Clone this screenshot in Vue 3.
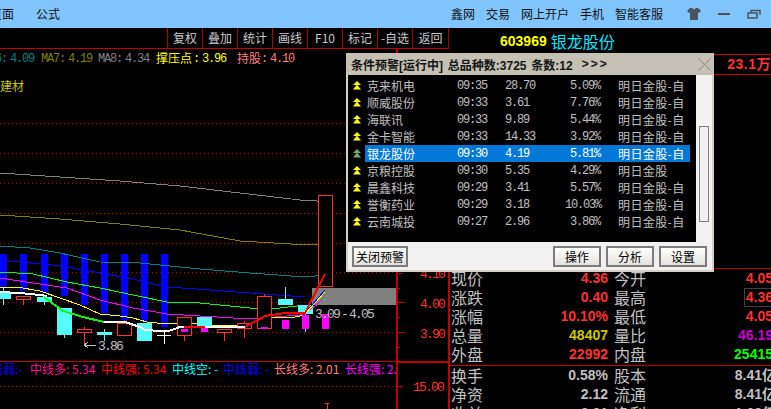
<template>
  <div class="screen">
    <header class="topbar">
      <div class="menu">
        <span class="clip-left">页面</span>
        <span>公式</span>
      </div>
      <div class="menu menu-end">
        <span>鑫网</span>
        <span>交易</span>
        <span>网上开户</span>
        <span>手机</span>
        <span>智能客服</span>
      </div>
      <div class="win-btns">
        <svg width="14" height="14" viewBox="0 0 14 14">
          <path d="M3 1 L5 1 L7 2.5 L9 1 L11 1 L14 4 L12 6 L11 5 L11 13 L3 13 L3 5 L2 6 L0 4 Z" fill="#4a5560" />
        </svg>
        <svg width="14" height="14" viewBox="0 0 14 14">
          <rect x="1" y="6" width="12" height="2" fill="#4a5560" />
        </svg>
        <svg width="14" height="14" viewBox="0 0 14 14">
          <path d="M4 3.5 H13 V8 M1 6 H10 V11 H1 Z M4 3 V6" fill="none" stroke="#4a5560" stroke-width="1.5" />
        </svg>
      </div>
    </header>

    <div class="body">
      <section class="left">
        <div class="toolbar">
          <span v-for="t in tools" :key="t" class="tool">{{ t }}</span>
        </div>
        <svg class="chart" viewBox="0 49 449 360" width="449" height="360">
          <text y="62" class="legend">
            <tspan x="-5" fill="#008080">6: 4.09</tspan>
            <tspan x="41" fill="#808000">MA7: 4.19</tspan>
            <tspan x="98" fill="#808080">MA8: 4.34</tspan>
            <tspan x="193" fill="#ffff00">: 3.96</tspan>
            <tspan x="261" fill="#ff8080">: 4.10</tspan>
          </text>
          <text y="63" class="legend-cjk">
            <tspan x="156" fill="#ffff00">撑压点</tspan>
            <tspan x="237" fill="#ff8080">持股</tspan>
          </text>
          <text x="0" y="91" class="sector">建材</text>

          <line v-for="y in dotted" :key="y" x1="0" x2="397" :y1="y" :y2="y" stroke="#a80000" stroke-dasharray="1 3" />

          <rect v-for="(b, i) in blueBars" :key="'b' + i" :x="b[0]" y="254" width="7" :height="b[1] - 254" fill="#0000ff" />

          <polyline v-for="l in thinLines" :key="l.color" :points="l.points" :stroke="l.color" fill="none" />

          <g v-for="(c, i) in candles" :key="'c' + i">
            <line :x1="c.x + 7.5" :x2="c.x + 7.5" :y1="c.hi" :y2="c.lo" :stroke="c.color" />
            <rect :x="c.solid ? c.x : c.x + 0.5" :y="c.solid ? c.top : c.top + 0.5" :width="c.solid ? 15 : 14" :height="c.solid ? c.bot - c.top : c.bot - c.top - 1" :fill="c.solid ? c.color : '#000'" :stroke="c.solid ? 'none' : c.color" />
          </g>

          <rect v-for="(m, i) in magenta" :key="'m' + i" :x="m[0]" :y="m[1]" width="7" :height="m[2] - m[1]" fill="#ff00ff" />

          <line x1="157" x2="171" y1="335.5" y2="335.5" stroke="#fff" />
          <line x1="164.5" x2="164.5" y1="331" y2="344" stroke="#fff" />

          <polyline points="0,292 20,293 40,295 47,296" stroke="#fff" stroke-width="2" fill="none" />
          <polyline points="44,297 63,311 83,317 104,322" stroke="#00ff00" stroke-width="2" fill="none" />
          <polyline points="104,322 125,322 140,327 145,330 160,331 170,330.5 180,327 245,327" stroke="#fff" stroke-width="2" fill="none" />
          <polyline points="184,327 205,327" stroke="#ff0000" stroke-width="2" fill="none" />

          <rect x="312" y="288" width="85" height="17" fill="#808080" />

          <polyline points="305,313 325,290" stroke="#0000ff" fill="none" />
          <polyline points="305,313 325,299" stroke="#00ff00" fill="none" />
          <polyline points="305,313 323,300" stroke="#ff00ff" fill="none" />
          <polyline points="305,314 325,292" stroke="#ffff00" fill="none" />
          <polyline points="245,327 265,316 285,313 305,313 325,274" stroke="#ff0000" stroke-width="2" fill="none" />

          <path d="M96 345 H85 M88 342 L84.5 345 L88 348" stroke="#c0c0c0" fill="none" />
          <text x="98" y="350" class="note">3.86</text>
          <text x="315" y="318" class="note">3.09 - 4.05</text>

          <line x1="0" x2="397" y1="361.5" y2="361.5" stroke="#c00000" />
          <line x1="397" x2="449" y1="362" y2="362" stroke="#c00000" stroke-width="2" />
          <line x1="0" x2="397" y1="386" y2="386" stroke="#a80000" stroke-dasharray="1 3" />

          <text y="374" class="ind">
            <tspan x="-9" fill="#0000ff">线弱:-</tspan>
            <tspan x="30" fill="#ff1493">中线多: 5.34</tspan>
            <tspan x="101" fill="#ff0000">中线强: 5.34</tspan>
            <tspan x="172" fill="#00ffff">中线空: -</tspan>
            <tspan x="223" fill="#0000ff">中线弱: -</tspan>
            <tspan x="274" fill="#ff8080">长线多: 2.01</tspan>
            <tspan x="345" fill="#ff00ff">长线强: 2.</tspan>
          </text>

          <line x1="397" x2="397" y1="49" y2="409" stroke="#c00000" stroke-width="2" />
          <line v-for="t in ticks" :key="t[0]" x1="397" :x2="397 + t[1]" :y1="t[0]" :y2="t[0]" stroke="#c00000" />
          <text x="420" y="308" class="axis">4.00</text>
          <text x="420" y="338" class="axis">3.90</text>
          <text x="413" y="391" class="axis">15.00</text>
          <text x="420" y="278" class="axis">4.10</text>

          <path d="M325 403 H329 M327 403 V409" stroke="#ff3030" fill="none" />
        </svg>
      </section>

      <section class="right">
        <div class="title-row">
          <span class="code">603969</span>
          <span class="stock-name">银龙股份</span>
        </div>
        <div class="amount-row">23.1万</div>
        <div class="spacer"></div>
        <div class="lower">
          <div class="stats top-stats">
            <template v-for="r in statsA" :key="r[0]">
              <span class="label">{{ r[0] }}</span>
              <span class="num" :class="r[2]">{{ r[1] }}</span>
              <span class="label">{{ r[3] }}</span>
              <span class="num end" :class="[r[5], { boxed: r[3] === '最高' }]">{{ r[4] }}</span>
            </template>
          </div>
          <div class="stats">
            <template v-for="r in statsB" :key="r[0]">
              <span class="label">{{ r[0] }}</span>
              <span class="num silver">{{ r[1] }}</span>
              <span class="label">{{ r[2] }}</span>
              <span class="num end silver">{{ r[3] }}</span>
            </template>
          </div>
        </div>
      </section>
    </div>

    <div class="dialog">
      <div class="dlg-title">
        <span class="dlg-caption">条件预警[运行中] 总品种数:3725 条数:12</span>
        <span class="dlg-more">&gt;&gt;&gt;</span>
        <svg class="dlg-close" width="13" height="13" viewBox="0 0 13 13">
          <path d="M0.5 0.5 L12.5 12.5 M12.5 0.5 L0.5 12.5" stroke="#8a8a8a" fill="none" />
        </svg>
      </div>
      <div class="dlg-body">
        <div class="list">
          <div v-for="row in alerts" :key="row.name" class="row" :class="{ selected: row.name === '银龙股份' }">
            <svg class="up" width="8" height="9" viewBox="0 0 8 9">
              <path d="M4 0 L8 4 H0 Z M4 3.5 L8 8.5 H0 Z" :fill="row.name === '银龙股份' ? '#6fae6f' : '#ffff00'" />
            </svg>
            <div class="cells">
              <span class="c-name">{{ row.name }}</span>
              <span class="c-time mono">{{ row.time }}</span>
              <span class="c-price mono">{{ row.price }}</span>
              <span class="c-pct mono">{{ row.pct }}</span>
              <span class="c-src">{{ row.src }}</span>
            </div>
          </div>
        </div>
        <div class="scroll"><div class="thumb"></div></div>
      </div>
      <div class="dlg-foot">
        <button class="btn wide">关闭预警</button>
        <div class="foot-right">
          <button class="btn">操作</button>
          <button class="btn">分析</button>
          <button class="btn">设置</button>
        </div>
      </div>
    </div>
  </div>
</template>

<script setup>
const tools = ['复权', '叠加', '统计', '画线', 'F10', '标记', '-自选', '返回']

const dotted = [123, 153, 183, 213, 243, 272, 302, 332]

const blueBars = [[0, 288], [20, 291], [41, 293], [61, 296], [81, 305], [101, 313], [121, 320], [141, 322], [161, 327]]

const thinLines = [
  { color: '#808080', points: '0,173 60,177 120,181 180,186 240,193 300,200 325,201.5' },
  { color: '#808000', points: '0,215 60,219 120,224 180,230 240,241 300,244.5 325,244.5' },
  { color: '#008080', points: '0,246 30,248 60,253 100,262 140,263 200,269 250,273 305,277 325,275' },
  { color: '#0000ff', points: '0,261 20,262 53,265 73,268 100,273 133,279 167,287 197,289 250,293 305,297' },
  { color: '#00ff00', points: '0,272 33,274 67,282 100,288 133,295 167,302 200,303 250,308 280,308 305,305' },
  { color: '#ff00ff', points: '0,278 33,283 67,288 100,300 133,308 167,314 200,316 250,319 300,315 305,313' },
  { color: '#ffff00', points: '0,287 17,287 40,291 60,298 80,305 100,314 120,316 133,318 147,322 167,324 190,323 223,326 243,325 255,322 270,317 295,317 305,315' }
]

const red = '#ff3232'
const cyan = '#54fcfc'
const candles = [
  { x: -4, top: 293, bot: 299, hi: 288, lo: 305, color: cyan, solid: true },
  { x: 16, top: 296, bot: 300, hi: 296, lo: 305, color: red },
  { x: 37, top: 297, bot: 302, hi: 297, lo: 305, color: cyan, solid: true },
  { x: 57, top: 308, bot: 335, hi: 308, lo: 338, color: cyan, solid: true },
  { x: 77, top: 329, bot: 333, hi: 327, lo: 345, color: red },
  { x: 97, top: 332, bot: 335, hi: 329, lo: 341, color: cyan, solid: true },
  { x: 117, top: 323, bot: 336, hi: 320, lo: 336, color: red },
  { x: 137, top: 323, bot: 341, hi: 323, lo: 341, color: cyan, solid: true },
  { x: 177, top: 317, bot: 336, hi: 317, lo: 341, color: red },
  { x: 197, top: 317, bot: 328, hi: 317, lo: 328, color: cyan, solid: true },
  { x: 217, top: 329, bot: 333, hi: 329, lo: 341, color: red },
  { x: 237, top: 323, bot: 329, hi: 321, lo: 338, color: red },
  { x: 257, top: 296, bot: 329, hi: 294, lo: 329, color: red },
  { x: 278, top: 299, bot: 305, hi: 287, lo: 305, color: cyan, solid: true },
  { x: 298, top: 305, bot: 314, hi: 305, lo: 332, color: cyan, solid: true },
  { x: 318, top: 195, bot: 287, hi: 195, lo: 287, color: red }
]

const magenta = [[181, 329, 332], [201, 327, 332], [261, 327, 329], [282, 320, 329], [302, 315, 329], [322, 314, 329]]

const ticks = [[273, 5], [288, 3], [302.5, 8], [317.5, 3], [332.5, 8], [347.5, 3], [386.5, 6]]

const src = '明日金股-自'
const alerts = [
  { name: '克来机电', time: '09:35', price: '28.70', pct: '5.09%', src },
  { name: '顺威股份', time: '09:33', price: '3.61', pct: '7.76%', src },
  { name: '海联讯', time: '09:33', price: '9.89', pct: '5.44%', src },
  { name: '金卡智能', time: '09:33', price: '14.33', pct: '3.92%', src },
  { name: '银龙股份', time: '09:30', price: '4.19', pct: '5.81%', src },
  { name: '京粮控股', time: '09:30', price: '5.35', pct: '4.29%', src: '明日金股' },
  { name: '晨鑫科技', time: '09:29', price: '3.41', pct: '5.57%', src },
  { name: '誉衡药业', time: '09:29', price: '3.18', pct: '10.03%', src },
  { name: '云南城投', time: '09:27', price: '2.96', pct: '3.86%', src }
]

const statsA = [
  ['现价', '4.36', 'red', '今开', '4.05', 'red'],
  ['涨跌', '0.40', 'red', '最高', '4.36', 'red'],
  ['涨幅', '10.10%', 'red', '最低', '4.05', 'red'],
  ['总量', '48407', 'olive-bright', '量比', '46.19', 'purple'],
  ['外盘', '22992', 'red', '内盘', '25415', 'green']
]

const statsB = [
  ['换手', '0.58%', '股本', '8.41亿'],
  ['净资', '2.12', '流通', '8.41亿'],
  ['收益', '0.21', '净利', '1.02亿']
]
</script>

<style>
html,
body {
  margin: 0;
  background: #000;
  overflow: hidden;
}
</style>

<style scoped>
.screen {
  position: relative;
  width: 771px;
  height: 409px;
  overflow: hidden;
  background: #000;
  display: flex;
  flex-direction: column;
  font-family: "Noto Sans CJK SC", "Liberation Sans", sans-serif;
  font-size: 12px;
  color: #c0c0c0;
}

.topbar {
  height: 28px;
  flex: none;
  background: #81c5ff;
  color: #111;
  display: flex;
  align-items: center;
}

.menu {
  display: flex;
  gap: 11px;
  line-height: 28px;
}

.clip-left {
  margin-left: -10px;
  margin-right: 11px;
}

.menu-end {
  margin-left: auto;
}

.win-btns {
  display: flex;
  gap: 16px;
  margin-left: 24px;
  margin-right: 10px;
}

.body {
  flex: 1;
  display: flex;
  min-height: 0;
}

.left {
  width: 449px;
  flex: none;
  display: flex;
  flex-direction: column;
}

.toolbar {
  height: 20px;
  flex: none;
  display: flex;
  justify-content: flex-end;
  border-bottom: 1px solid #c00000;
}

.tool {
  width: 35px;
  box-sizing: border-box;
  border-left: 1px solid #a80000;
  text-align: center;
  line-height: 20px;
  color: #c8c8c8;
}

.tool:last-child {
  width: 37px;
  border-right: 1px solid #a80000;
}

.chart {
  display: block;
  flex: none;
  shape-rendering: crispEdges;
}

.legend {
  font-family: "Liberation Mono", monospace;
  font-size: 12px;
  letter-spacing: -1.2px;
  word-spacing: -3px;
}

.legend-cjk {
  font-size: 12px;
}

.sector {
  fill: #c8c800;
  font-size: 12px;
}

.note {
  fill: #c0c0c0;
  font-family: "Liberation Mono", monospace;
  font-size: 13px;
  letter-spacing: -1.8px;
  word-spacing: -4px;
}

.ind {
  font-size: 12px;
}

.axis {
  fill: #ff3232;
  font-family: "Liberation Mono", monospace;
  font-size: 13px;
  letter-spacing: -1.8px;
}

.right {
  flex: 1;
  min-width: 0;
  display: flex;
  flex-direction: column;
}

.title-row {
  height: 25px;
  padding-bottom: 1px;
  flex: none;
  display: flex;
  align-items: center;
  gap: 4px;
  padding-left: 51px;
}

.code {
  color: #ffff00;
  font-family: "Liberation Sans", sans-serif;
  font-weight: 700;
  font-size: 14px;
}

.stock-name {
  color: #00e8ff;
  font-size: 16px;
}

.amount-row {
  height: 19px;
  flex: none;
  border-top: 1px solid #c00000;
  border-bottom: 1px solid #c00000;
  color: #ff3232;
  font-family: "Liberation Sans", "Noto Sans CJK SC", sans-serif;
  font-weight: 700;
  font-size: 14px;
  letter-spacing: 0.5px;
  line-height: 19px;
  text-align: right;
}

.spacer {
  height: 193px;
  flex: none;
  border-bottom: 1px solid #c00000;
}

.lower {
  flex: 1;
  min-height: 0;
  margin-left: -1px;
  border-left: 2px solid #c00000;
}

.stats {
  display: grid;
  grid-template-columns: 32px 131px 32px 1fr;
  grid-auto-rows: 19px;
  padding-left: 1px;
  line-height: 19px;
  white-space: nowrap;
}

.top-stats {
  height: 95px;
  padding-bottom: 1px;
  border-bottom: 1px solid #c00000;
}

.label {
  font-size: 16px;
  color: #c0c0c0;
  line-height: 19px;
}

.num {
  font-family: "Liberation Sans", "Noto Sans CJK SC", sans-serif;
  font-weight: 700;
  font-size: 14px;
  text-align: right;
  padding-right: 6px;
}

.num.end {
  padding-right: 0;
  justify-self: end;
  margin-right: -2px;
}

.num.silver.end {
  margin-right: -5px;
}

.red { color: #ff3232; }
.olive-bright { color: #c8c800; }
.purple { color: #c800c8; }
.green { color: #00ff00; }
.silver { color: #c0c0c0; }

.boxed {
  outline: 1px solid #404040;
  outline-offset: -1px;
  padding-left: 2px;
}

.dialog {
  position: absolute;
  left: 346px;
  top: 53px;
  width: 368px;
  height: 219px;
  box-sizing: border-box;
  border: 2px solid #d4d0c8;
  border-top: 0;
  display: flex;
  flex-direction: column;
  background: #f0f0f0;
}

.dlg-title {
  height: 22px;
  flex: none;
  margin: 0 -2px;
  background: #c4c0b4;
  color: #151515;
  display: flex;
  align-items: center;
  padding-left: 5px;
  font-family: "Liberation Sans", "Noto Sans CJK SC", sans-serif;
  font-weight: 700;
  font-size: 12px;
  white-space: nowrap;
}

.dlg-caption {
  word-spacing: 1.5px;
}

.dlg-more {
  margin-left: 9px;
  letter-spacing: 2px;
}

.dlg-close {
  margin-left: auto;
  margin-right: 3px;
}

.dlg-body {
  flex: 1;
  display: flex;
  min-height: 0;
}

.list {
  width: 348px;
  flex: none;
  background: #000;
  padding-top: 2px;
}

.row {
  height: 17px;
  display: flex;
  align-items: center;
}

.up {
  margin-left: 5px;
  margin-right: 4px;
  flex: none;
}

.cells {
  width: 325px;
  height: 17px;
  display: flex;
  align-items: center;
  padding-left: 2px;
  box-sizing: border-box;
  white-space: nowrap;
}

.selected .cells {
  background: #0078d7;
  color: #fff;
}

.c-name { width: 90px; }
.c-time { width: 48px; }
.c-price { width: 60px; }
.c-pct { width: 35px; text-align: right; }
.c-src { margin-left: 18px; letter-spacing: 0.4px; }

.mono {
  font-family: "Liberation Mono", monospace;
  letter-spacing: -1.2px;
}

.scroll {
  flex: 1;
  background: #f3f2f0;
  position: relative;
}

.thumb {
  position: absolute;
  left: 3px;
  top: 51px;
  width: 10px;
  height: 96px;
  box-sizing: border-box;
  border: 1px solid #808080;
  background: #f0f0f0;
}

.dlg-foot {
  height: 28px;
  flex: none;
  display: flex;
  justify-content: space-between;
  align-items: center;
  padding: 0 5px 0 4px;
}

.foot-right {
  display: flex;
  gap: 5px;
}

.btn {
  width: 48px;
  height: 21px;
  padding: 0;
  box-sizing: border-box;
  border: 2px solid #7c7c7c;
  background: linear-gradient(#ffffff, #e4e2de);
  color: #000;
  font-family: "Noto Sans CJK SC", sans-serif;
  font-size: 12px;
  line-height: 17px;
}

.btn.wide {
  width: 56px;
}
</style>
